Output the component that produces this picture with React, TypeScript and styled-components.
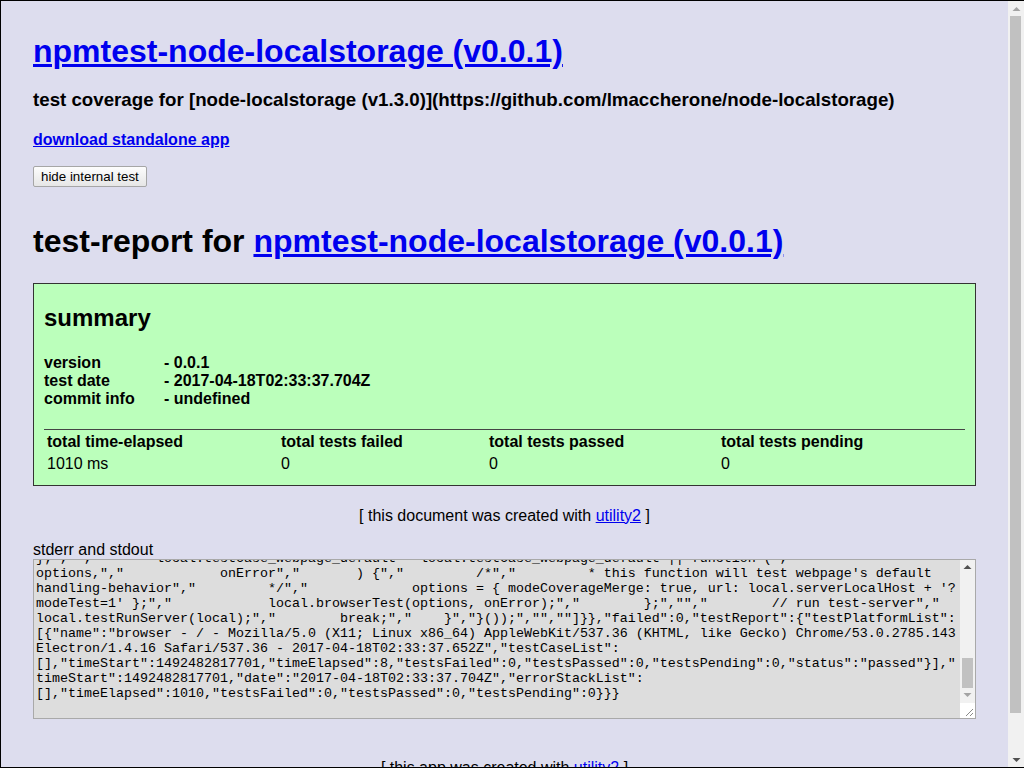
import React, { useLayoutEffect, useRef } from "react";
import styled, { createGlobalStyle } from "styled-components";

const GlobalStyle = createGlobalStyle`
  html, body {
    margin: 0;
    padding: 0;
    background: #dde;
  }
`;

const Frame = styled.div`
  height: 100vh;
  box-sizing: border-box;
  border: 1px solid #000;
  border-right: none;
  display: flex;
  overflow: hidden;
  background: #dde;
  color: #000;
  font-family: "Liberation Sans", Arial, Helvetica, sans-serif;
  font-size: 16px;
  line-height: 18.4px;
`;

const Viewport = styled.div`
  flex: 1;
  min-width: 0;
  overflow: hidden;
`;

/* drawn scrollbars */
const ScrollColumn = styled.div<{ $w: number }>`
  flex: 0 0 ${(p) => p.$w}px;
  width: ${(p) => p.$w}px;
  display: flex;
  flex-direction: column;
  background: #f1f1f1;
`;

const ArrowButton = styled.div`
  flex: 0 0 15px;
  height: 15px;
  display: flex;
  align-items: center;
  justify-content: center;
`;

const Track = styled.div<{ $end?: boolean }>`
  flex: 1;
  display: flex;
  flex-direction: column;
  justify-content: ${(p) => (p.$end ? "flex-end" : "flex-start")};
`;

const Thumb = styled.div<{ $h: number; $inset: string }>`
  height: ${(p) => p.$h}px;
  margin: ${(p) => p.$inset};
  background: #c1c1c1;
`;

const Resizer = styled.div`
  flex: 0 0 15px;
  height: 15px;
  background: #fff;
  display: flex;
  align-items: flex-end;
  justify-content: flex-end;
`;

const Arrow = ({ up, color }: { up?: boolean; color: string }) => (
  <svg width="9" height="6" viewBox="0 0 9 6">
    <polygon points={up ? "0.5,5 4.5,1 8.5,5" : "0.5,1 4.5,5 8.5,1"} fill={color} />
  </svg>
);

const Main = styled.div`
  padding: 32px 32px 32px;
`;

const Link = styled.a`
  color: #00e;
  text-decoration: underline;
`;

const PageTitle = styled.h1<{ $gap?: number }>`
  margin: ${(p) => p.$gap ?? 0}px 0 0;
  font-size: 32px;
  line-height: 37px;
  font-weight: bold;
`;

const Subtitle = styled.h3`
  margin: 18.72px 0 0;
  font-size: 18.72px;
  line-height: 21.5px;
  font-weight: bold;
`;

const DownloadHeading = styled.h4`
  margin: 21.28px 0 0;
  font-size: 16px;
  line-height: 18.4px;
  font-weight: bold;
`;

const ToggleButton = styled.button`
  display: block;
  margin-top: 16px;
  height: 21px;
  padding: 0 7px;
  font-family: "Liberation Sans", Arial, sans-serif;
  font-size: 13.333px;
  color: #000;
  background: linear-gradient(#fdfdfd, #e6e6e6);
  border: 1px solid #a6a6a6;
  border-radius: 2px;
`;

const SummaryCard = styled.section`
  margin-top: 22.6px;
  background: #bfb;
  border: 1px solid #333;
  padding: 0 10px 11px;
`;

const SummaryHeading = styled.h2`
  margin: 20px 0 23px;
  font-size: 24px;
  line-height: 27.6px;
  font-weight: bold;
`;

const InfoGrid = styled.div`
  display: grid;
  grid-template-columns: 120px 1fr;
  font-weight: bold;
  line-height: 18px;
`;

const StatsGrid = styled.div`
  margin-top: 21px;
  border-top: 1px solid #444;
  display: grid;
  grid-template-columns: 234px 208px 232px 1fr;
`;

const StatCell = styled.div<{ $head?: boolean }>`
  padding: ${(p) => (p.$head ? "3px" : "2px")} 3px 1px;
  font-weight: ${(p) => (p.$head ? "bold" : "normal")};
`;

const CreatedNote = styled.div<{ $gap: number }>`
  margin-top: ${(p) => p.$gap}px;
  text-align: center;
`;

const StreamLabel = styled.div`
  margin-top: 16px;
`;

const OutputBox = styled.div`
  margin-top: -1px;
  height: 160px;
  box-sizing: border-box;
  border: 1px solid #a9a9a9;
  background: #ddd;
  display: flex;
`;

const Output = styled.textarea`
  flex: 1;
  min-width: 0;
  display: block;
  box-sizing: border-box;
  height: 100%;
  margin: 0;
  padding: 2px;
  border: none;
  outline: none;
  resize: none;
  overflow: hidden;
  background: transparent;
  color: #000;
  font-family: "Liberation Mono", "Courier New", monospace;
  font-size: 13.333px;
  line-height: 15px;
`;

const filler = [
  '{"coverage":null,"testReport":{"testPlatformList":[{"name":"node - linux - v7.7.4","screenCaptureImg":"",',
  '"testCaseList":[{"errorStack":"","name":"testCase_buildApidoc_default","status":"passed","timeElapsed":1},',
  '{"errorStack":"","name":"testCase_buildApp_default","status":"passed","timeElapsed":2},{"errorStack":"",',
  '"name":"testCase_webpage_default","status":"passed","timeElapsed":815}],"timeElapsed":1010,"testsFailed":0,',
  '"testsPassed":3,"testsPending":0}],"coverageLines":["/* istanbul instrument in package npmtest_node_localstorage',
  ' */","/*jslint","    bitwise: true,","    browser: true,","    maxerr: 8,","    maxlen: 96,","    node: true,","',
  '    nomen: true,","    regexp: true,","    stupid: true","*/","(function () {","    \'use strict\';","    var local;","",',
  '"","    // run shared js-env code - pre-init","    (function () {","        // init local","        local = {};",',
  '"        // init modeJs","        local.modeJs = (function () {","            try {","                return',
  'typeof process.versions.node === \'string\' &&","                    typeof require(\'http\').createServer ===',
  '\'function\' &&","                    \'node\';","            } catch (errorCaughtNode) {","                return',
  'typeof navigator.userAgent === \'string\' &&","                    typeof document.querySelector(\'body\') ===',
  '\'object\' &&","                    typeof XMLHttpRequest.prototype.open === \'function\' &&","',
  '\'browser\';","            }","        }());","        // init global","        local.global = local.modeJs === \'browser\'",',
  '"            ? window","            : global;","        // init utility2_rollup","        local = local.global.utility2_rollup',
  '|| local;","        // init lib","        local.local = local.npmtest_node_localstorage = local;","        // init',
  'exports","        if (local.modeJs === \'browser\') {","            local.global.utility2_npmtest_node_localstorage =',
  'local;","        } else {","            module.exports = local;","            module.exports.__dirname = __dirname;","',
  '            module.exports.module = module;","        }","    }());","}());","","","","/* validateLineSortedReset',
  '*/","// run shared js-env code - function","(function () {","    \'use strict\';","    var local;","    local =',
  'this;","","","","    // run shared js-env code - function","(function () {","    local.testCase_buildApidoc_default =',
  'function (options, onError) {","    /*","     * this function will test buildApidoc\'s default handling-behavior',
  '","     */","        options = { modulePathList: module.paths };","        local.buildApidoc(options, onError);","',
  '    };","","    local.testCase_buildApp_default = function (options, onError) {","    /*","     * this function will',
  'test buildApp\'s default handling-behavior","     */","        local.testCase_buildReadme_default(options,',
  'local.onErrorThrow);","        local.buildApp({}, onError);","    };","","    // run node js-env code - function",',
  '"    switch (local.modeJs) {","    case \'node\':","        local.testCase_webpage_default =',
];

const sp = (n: number) => " ".repeat(n);

const visible = [
  '};","",' + sp(8) + 'local.testCase_webpage_default = local.testCase_webpage_default || function (","',
  'options,","' + sp(12) + 'onError","' + sp(7) + ') {","' + sp(9) + '/*","' + sp(9) + "* this function will test webpage's default",
  'handling-behavior","' + sp(9) + '*/","' + sp(13) + "options = { modeCoverageMerge: true, url: local.serverLocalHost + '?",
  "modeTest=1' };\",\"" + sp(12) + 'local.browserTest(options, onError);","' + sp(8) + '};","","' + sp(8) + '// run test-server","',
  'local.testRunServer(local);","' + sp(8) + 'break;","' + sp(4) + '}","}());","",""]}},"failed":0,"testReport":{"testPlatformList":',
  '[{"name":"browser - / - Mozilla/5.0 (X11; Linux x86_64) AppleWebKit/537.36 (KHTML, like Gecko) Chrome/53.0.2785.143',
  'Electron/1.4.16 Safari/537.36 - 2017-04-18T02:33:37.652Z","testCaseList":',
  '[],"timeStart":1492482817701,"timeElapsed":8,"testsFailed":0,"testsPassed":0,"testsPending":0,"status":"passed"}],"',
  'timeStart":1492482817701,"date":"2017-04-18T02:33:37.704Z","errorStackList":',
  '[],"timeElapsed":1010,"testsFailed":0,"testsPassed":0,"testsPending":0}}}',
  "",
];

const outputText = [...filler, ...visible].join("\n");

const info: [string, string][] = [
  ["version", "- 0.0.1"],
  ["test date", "- 2017-04-18T02:33:37.704Z"],
  ["commit info", "- undefined"],
];

const stats: [string, string][] = [
  ["total time-elapsed", "1010 ms"],
  ["total tests failed", "0"],
  ["total tests passed", "0"],
  ["total tests pending", "0"],
];

export default function App() {
  const outRef = useRef<HTMLTextAreaElement>(null);
  useLayoutEffect(() => {
    const el = outRef.current;
    if (el) el.scrollTop = el.scrollHeight;
  }, []);

  return (
    <>
      <GlobalStyle />
      <Frame>
        <Viewport>
          <Main>
            <PageTitle>
              <Link href="#">npmtest-node-localstorage (v0.0.1)</Link>
            </PageTitle>
            <Subtitle>
              test coverage for [node-localstorage (v1.3.0)](https://github.com/lmaccherone/node-localstorage)
            </Subtitle>
            <DownloadHeading>
              <Link href="#">download standalone app</Link>
            </DownloadHeading>
            <ToggleButton type="button">hide internal test</ToggleButton>
            <PageTitle $gap={36.4}>
              test-report for <Link href="#">npmtest-node-localstorage (v0.0.1)</Link>
            </PageTitle>
            <SummaryCard>
              <SummaryHeading>summary</SummaryHeading>
              <InfoGrid>
                {info.map(([k, v]) => (
                  <React.Fragment key={k}>
                    <span>{k}</span>
                    <span>{v}</span>
                  </React.Fragment>
                ))}
              </InfoGrid>
              <StatsGrid>
                {stats.map(([k]) => (
                  <StatCell $head key={k}>
                    {k}
                  </StatCell>
                ))}
                {stats.map(([k, v]) => (
                  <StatCell key={k + "v"}>{v}</StatCell>
                ))}
              </StatsGrid>
            </SummaryCard>
            <CreatedNote $gap={20.6}>
              [ this document was created with <Link href="#">utility2</Link> ]
            </CreatedNote>
            <StreamLabel>stderr and stdout</StreamLabel>
            <OutputBox>
              <Output ref={outRef} readOnly spellCheck={false} value={outputText} />
              <ScrollColumn $w={15}>
                <ArrowButton>
                  <Arrow up color="#505050" />
                </ArrowButton>
                <Track $end>
                  <Thumb $h={30} $inset="0 2px" />
                </Track>
                <ArrowButton>
                  <Arrow color="#a3a3a3" />
                </ArrowButton>
                <Resizer>
                  <svg width="15" height="15" viewBox="0 0 15 15">
                    <line x1="13" y1="6" x2="6" y2="13" stroke="#8a8a8a" strokeWidth="1" />
                    <line x1="13" y1="10" x2="10" y2="13" stroke="#8a8a8a" strokeWidth="1" />
                  </svg>
                </Resizer>
              </ScrollColumn>
            </OutputBox>
            <CreatedNote $gap={40.3}>
              [ this app was created with <Link href="#">utility2</Link> ]
            </CreatedNote>
          </Main>
        </Viewport>
        <ScrollColumn $w={16}>
          <ArrowButton>
            <Arrow up color="#a3a3a3" />
          </ArrowButton>
          <Track>
            <Thumb $h={697} $inset="0 3px 0 2px" />
          </Track>
          <ArrowButton>
            <Arrow color="#505050" />
          </ArrowButton>
        </ScrollColumn>
      </Frame>
    </>
  );
}
